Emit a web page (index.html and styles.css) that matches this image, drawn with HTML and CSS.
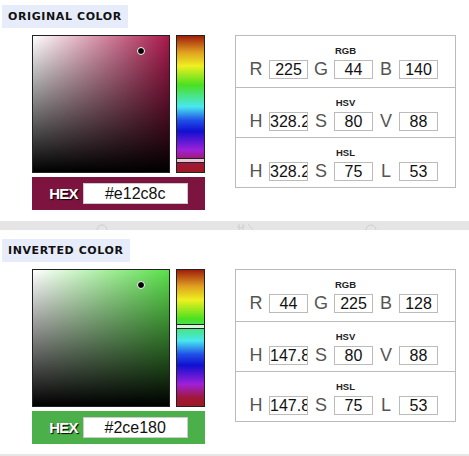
FILE: index.html
```html
<!DOCTYPE html>
<html lang="en">
<head>
    <meta charset="UTF-8">
    <meta name="viewport" content="width=device-width, initial-scale=1.0">
    <title>Color Inverter</title>
    <link rel="stylesheet" href="styles.css">
</head>
<body>
    <!-- Original color -->
    <div class="section first">
        <div class="heading">ORIGINAL COLOR</div>
        <div class="picker-row">
            <div class="picker">
                <div class="picker-top">
                    <div class="sv original"><span class="dot"></span></div>
                    <div class="hue"><span class="hue-mark" style="top: 122px;"></span></div>
                </div>
                <div class="hex-bar original-bar">
                    <span class="hex-label">HEX</span>
                    <input class="hex-input" type="text" value="#e12c8c">
                </div>
            </div>
            <div class="values">
                <div class="group">
                    <div class="group-name">RGB</div>
                    <div class="fields">
                        <label>R</label><input type="text" value="225">
                        <label>G</label><input type="text" value="44">
                        <label>B</label><input type="text" value="140">
                    </div>
                </div>
                <div class="group">
                    <div class="group-name">HSV</div>
                    <div class="fields">
                        <label>H</label><input type="text" value="328.2">
                        <label>S</label><input type="text" value="80">
                        <label>V</label><input type="text" value="88">
                    </div>
                </div>
                <div class="group">
                    <div class="group-name">HSL</div>
                    <div class="fields">
                        <label>H</label><input type="text" value="328.2">
                        <label>S</label><input type="text" value="75">
                        <label>L</label><input type="text" value="53">
                    </div>
                </div>
            </div>
        </div>
    </div>

    <div class="divider">
        <svg width="469" height="9" viewBox="0 0 469 9">
            <circle cx="102" cy="9" r="5" fill="none" stroke="#cfcfcf" stroke-width="1"/>
            <path d="M239 3 v6 M243 3 v6 M237 5 q4 4 8 0 M248 3 l5 6" fill="none" stroke="#cfcfcf" stroke-width="1"/>
            <circle cx="371" cy="9" r="5" fill="none" stroke="#cfcfcf" stroke-width="1"/>
        </svg>
    </div>

    <!-- Inverted color -->
    <div class="section">
        <div class="heading">INVERTED COLOR</div>
        <div class="picker-row">
            <div class="picker">
                <div class="picker-top">
                    <div class="sv inverted"><span class="dot"></span></div>
                    <div class="hue"><span class="hue-mark" style="top: 54px;"></span></div>
                </div>
                <div class="hex-bar inverted-bar">
                    <span class="hex-label">HEX</span>
                    <input class="hex-input" type="text" value="#2ce180">
                </div>
            </div>
            <div class="values">
                <div class="group">
                    <div class="group-name">RGB</div>
                    <div class="fields">
                        <label>R</label><input type="text" value="44">
                        <label>G</label><input type="text" value="225">
                        <label>B</label><input type="text" value="128">
                    </div>
                </div>
                <div class="group">
                    <div class="group-name">HSV</div>
                    <div class="fields">
                        <label>H</label><input type="text" value="147.8">
                        <label>S</label><input type="text" value="80">
                        <label>V</label><input type="text" value="88">
                    </div>
                </div>
                <div class="group">
                    <div class="group-name">HSL</div>
                    <div class="fields">
                        <label>H</label><input type="text" value="147.8">
                        <label>S</label><input type="text" value="75">
                        <label>L</label><input type="text" value="53">
                    </div>
                </div>
            </div>
        </div>
    </div>

    <div class="divider"></div>
</body>
</html>
```

FILE: styles.css
```css
body {
    margin: 0;
    padding: 0;
    background: #fff;
    font-family: "Liberation Sans", Arial, sans-serif;
    overflow: hidden;
}
.section {
    padding-top: 9px;
    height: 215px;
}
.section.first {
    padding-top: 5px;
    height: 216px;
}
.heading {
    display: inline-block;
    margin-left: 2px;
    height: 23px;
    line-height: 23px;
    padding: 0 6px;
    background: #e6ecfa;
    color: #111;
    font-family: "DejaVu Sans", sans-serif;
    font-weight: bold;
    font-size: 11px;
    letter-spacing: 0.6px;
}
.picker-row {
    display: flex;
    align-items: flex-start;
    margin-top: 7px;
    padding-left: 32px;
    gap: 30px;
}
.picker {
    width: 173px;
}
.picker-top {
    display: flex;
    gap: 6px;
    height: 138px;
}
.sv {
    position: relative;
    box-sizing: border-box;
    width: 138px;
    height: 138px;
    border: 1px solid #222;
}
.sv.original {
    background: linear-gradient(to top, #000, rgba(0, 0, 0, 0)),
                linear-gradient(to right, #fff, #a8184a);
}
.sv.inverted {
    background: linear-gradient(to top, #000, rgba(0, 0, 0, 0)),
                linear-gradient(to right, #fff, #5ae04a);
}
.dot {
    position: absolute;
    left: 104px;
    top: 11px;
    width: 6px;
    height: 6px;
    border-radius: 50%;
    background: #000;
    border: 1px solid #fff;
}
.hue {
    position: relative;
    box-sizing: border-box;
    width: 29px;
    height: 138px;
    border: 1px solid #222;
    background: linear-gradient(to bottom, #a01e0c 0%, #e0a020 12%, #eef020 22%, #4ae020 36%, #48e8f0 52%, #2050e8 62%, #1010d0 70%, #a020d8 84%, #a01838 94%, #a01820 100%);
}
.hue-mark {
    position: absolute;
    left: 0;
    right: 0;
    height: 3px;
    border-top: 1px solid #222;
    border-bottom: 1px solid #222;
    background: rgba(255, 255, 255, 0.75);
}
.hex-bar {
    display: flex;
    justify-content: center;
    align-items: center;
    gap: 5px;
    margin-top: 4px;
    height: 33px;
}
.original-bar {
    background: #7d1440;
}
.inverted-bar {
    background: #4bb04a;
}
.hex-label {
    color: #fff;
    font-weight: bold;
    font-size: 15px;
    letter-spacing: -0.8px;
    text-shadow: 1px 1px 1px #000;
}
.hex-input {
    box-sizing: border-box;
    width: 105px;
    height: 21px;
    border: 1px solid #ccc;
    padding: 0;
    text-align: center;
    font-family: "Liberation Sans", Arial, sans-serif;
    font-size: 16px;
    color: #111;
    background: #fff;
}
.values {
    box-sizing: border-box;
    width: 221px;
    border: 1px solid #bbb;
}
.group {
    height: 50px;
    border-top: 1px solid #bbb;
    padding-top: 10px;
    box-sizing: border-box;
}
.group:first-child {
    border-top: none;
    height: 51px;
}
.group-name {
    text-align: center;
    font-size: 9.5px;
    font-weight: bold;
    color: #222;
    height: 13px;
    line-height: 9px;
}
.fields {
    display: flex;
    align-items: center;
    padding-left: 7px;
}
.fields label {
    width: 26px;
    text-align: center;
    font-size: 18px;
    color: #555;
}
.fields input {
    box-sizing: border-box;
    width: 39px;
    height: 19px;
    border: 1px solid #bbb;
    padding: 0;
    text-align: center;
    font-family: "Liberation Sans", Arial, sans-serif;
    font-size: 16px;
    color: #111;
    background: #fff;
}
.divider {
    height: 9px;
    background: #e5e5e5;
    overflow: hidden;
}
.divider svg {
    display: block;
}
```
